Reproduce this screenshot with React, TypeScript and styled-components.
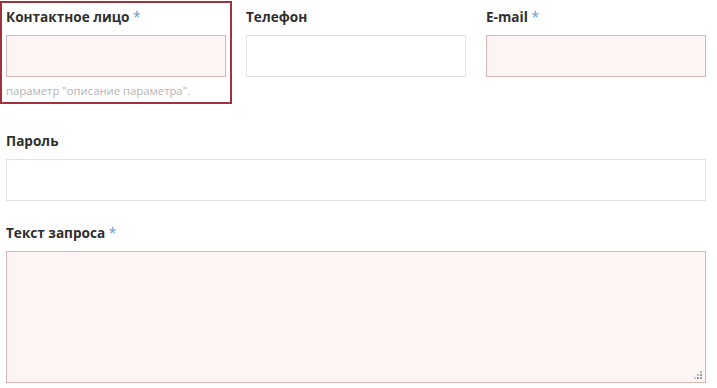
import React from "react";
import styled, { createGlobalStyle } from "styled-components";

const GlobalStyle = createGlobalStyle`
  body {
    margin: 0;
    background: #fff;
    font-family: "Open Sans", "Liberation Sans", sans-serif;
    color: #333;
  }
`;

const Form = styled.form`
  width: 700px;
  padding: 7px 11px 0 6px;
  display: flex;
  flex-direction: column;
  gap: 22px;
`;

const Row = styled.div`
  display: grid;
  grid-template-columns: repeat(3, 220px);
  column-gap: 20px;
  padding-bottom: 11px;
`;

const Field = styled.div<{ $focused?: boolean }>`
  position: relative;
  display: flex;
  flex-direction: column;
  outline: ${(p) => (p.$focused ? "2px solid #a3303d" : "none")};
  outline-offset: 4px;
`;

const Label = styled.label`
  font-size: 13.6px;
  font-weight: 700;
  line-height: 19px;
  margin-bottom: 9px;
  color: #2f2f2f;
`;

const Star = styled.span`
  color: #5b9fd0;
  font-weight: 400;
`;

const Input = styled.input<{ $required?: boolean }>`
  box-sizing: border-box;
  height: 42px;
  width: 100%;
  border: 1px solid ${(p) => (p.$required ? "#dab5b5" : "#e2e2e2")};
  background: ${(p) => (p.$required ? "#fdf4f4" : "#fff")};
  outline: none;
  padding: 0 8px;
  font: inherit;
`;

const TextArea = styled.textarea`
  box-sizing: border-box;
  width: 100%;
  height: 132px;
  border: 1px solid #dab5b5;
  background: #fdf4f4;
  outline: none;
  display: block;
  resize: none;
  font: inherit;
`;

const Grip = styled.svg`
  position: absolute;
  right: 4px;
  bottom: 4px;
  width: 8px;
  height: 8px;
`;

const Hint = styled.div`
  font-size: 11.3px;
  color: #b3b3b3;
  margin-top: 6px;
  line-height: 15px;
`;

export default function App() {
  return (
    <>
      <GlobalStyle />
      <Form>
        <Row>
          <Field $focused>
            <Label>
              Контактное лицо <Star>*</Star>
            </Label>
            <Input $required />
            <Hint>параметр "описание параметра".</Hint>
          </Field>
          <Field>
            <Label>Телефон</Label>
            <Input />
          </Field>
          <Field>
            <Label>
              E-mail <Star>*</Star>
            </Label>
            <Input $required />
          </Field>
        </Row>
        <Field>
          <Label>Пароль</Label>
          <Input type="password" />
        </Field>
        <Field>
          <Label>
            Текст запроса <Star>*</Star>
          </Label>
          <TextArea />
          <Grip viewBox="0 0 8 8">
            <rect x="6" y="0" width="2" height="2" fill="#b8b8b8" />
            <rect x="3" y="3" width="2" height="2" fill="#b8b8b8" />
            <rect x="6" y="3" width="2" height="2" fill="#9a9a9a" />
            <rect x="0" y="6" width="2" height="2" fill="#c8c8c8" />
            <rect x="3" y="6" width="2" height="2" fill="#9a9a9a" />
            <rect x="6" y="6" width="2" height="2" fill="#9a9a9a" />
          </Grip>
        </Field>
      </Form>
    </>
  );
}
